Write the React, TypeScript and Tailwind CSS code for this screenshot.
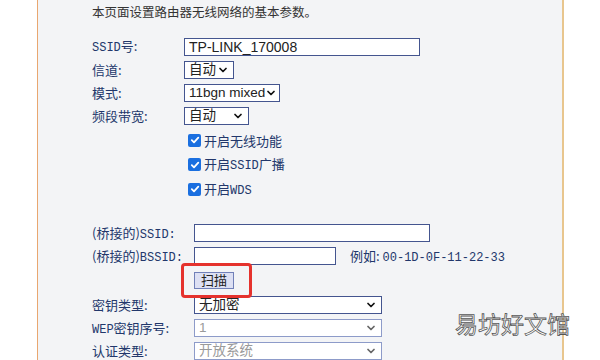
import { ChevronDown } from 'lucide-react';

const cn = '"Noto Sans CJK SC", sans-serif';
const latin = '"Liberation Sans", Arial, "Noto Sans CJK SC", sans-serif';

function Mono({ children }: { children: string }) {
  return <span className="font-['Liberation_Mono',monospace] text-[12px]">{children}</span>;
}

function Row({ label, width, children }: { label: React.ReactNode; width: string; children: React.ReactNode }) {
  return (
    <div className="flex items-center h-[23px]">
      <div className={`${width} shrink-0 text-[13px] text-[#22376b] whitespace-nowrap`} style={{ fontFamily: cn }}>
        {label}
      </div>
      {children}
    </div>
  );
}

function Select({ value, width, disabled }: { value: string; width: string; disabled?: boolean }) {
  return (
    <div
      className={`${width} h-[18px] flex items-center justify-between pl-[4px] pr-[4px] bg-white border whitespace-nowrap ${
        disabled ? 'border-[#8d9bc9] text-[#9a9a9a]' : 'border-[#44558f] text-[#222]'
      } text-[13.5px] leading-none`}
      style={{ fontFamily: latin }}
    >
      <span>{value}</span>
      <ChevronDown size={12} strokeWidth={3.5} className={`shrink-0 ${disabled ? 'text-[#666]' : 'text-[#111]'}`} />
    </div>
  );
}

function Input({ value, width }: { value?: string; width: string }) {
  return (
    <div
      className={`${width} h-[18px] flex items-center px-[4px] bg-white border border-[#44558f] text-[14px] text-[#222] leading-none`}
      style={{ fontFamily: latin }}
    >
      {value}
    </div>
  );
}

function Check({ children }: { children: React.ReactNode }) {
  return (
    <div className="flex items-center h-[24.5px] pl-[4px]">
      <span className="w-[13px] h-[13px] rounded-[2px] bg-[#1a6fe0] flex items-center justify-center">
        <svg width="10" height="10" viewBox="0 0 10 10">
          <path d="M1.8 5.2 L4 7.3 L8.3 2.6" fill="none" stroke="white" strokeWidth="1.8" strokeLinecap="round" strokeLinejoin="round" />
        </svg>
      </span>
      <span className="ml-[3px] text-[13px] text-[#22376b]" style={{ fontFamily: cn }}>
        {children}
      </span>
    </div>
  );
}

export default function App() {
  return (
    <div className="w-[600px] h-[360px] flex bg-white overflow-hidden relative">
      <div className="w-[37px] shrink-0 bg-white" />
      <div className="w-[1px] shrink-0 bg-[#e9a770]" />
      <div className="w-[524px] shrink-0 bg-[#f3f4f6] pl-[54px] pt-[4px]">
        <div className="h-[16px] flex items-center text-[12.5px] text-[#333]" style={{ fontFamily: cn }}>
          本页面设置路由器无线网络的基本参数。
        </div>

        <div className="mt-[15px]">
          <Row label={<><Mono>SSID</Mono>号:</>} width="w-[92px]">
            <Input value="TP-LINK_170008" width="w-[236px]" />
          </Row>
          <Row label="信道:" width="w-[92px]">
            <Select value="自动" width="w-[50px]" />
          </Row>
          <Row label="模式:" width="w-[92px]">
            <Select value="11bgn mixed" width="w-[96px]" />
          </Row>
          <Row label="频段带宽:" width="w-[92px]">
            <Select value="自动" width="w-[65px]" />
          </Row>
        </div>

        <div className="pl-[92px] mt-[1px]">
          <Check>开启无线功能</Check>
          <Check>
            开启<Mono>SSID</Mono>广播
          </Check>
          <Check>
            开启<Mono>WDS</Mono>
          </Check>
        </div>

        <div className="mt-[20px]">
          <Row label={<>(桥接的)<Mono>SSID:</Mono></>} width="w-[102px]">
            <Input width="w-[236px]" />
          </Row>
          <Row label={<>(桥接的)<Mono>BSSID:</Mono></>} width="w-[102px]">
            <Input width="w-[142px]" />
            <span className="ml-[14px] text-[13px] text-[#22376b]" style={{ fontFamily: cn }}>
              例如: <Mono>00-1D-0F-11-22-33</Mono>
            </span>
          </Row>
          <div className="pl-[102px] mt-[4px] h-[22px]">
            <div className="relative w-[40px] h-[17px]">
              <div
                className="w-[40px] h-[17px] flex items-center justify-center bg-[#dde0f3] border border-[#7180b8] text-[13px] text-[#222]"
                style={{ fontFamily: cn }}
              >
                扫描
              </div>
              <div className="absolute -left-[13px] -top-[9px] w-[71px] h-[35px] border-[3px] border-[#e5322d] rounded-[4px]" />
            </div>
          </div>
          <Row label="密钥类型:" width="w-[102px]">
            <Select value="无加密" width="w-[188px]" />
          </Row>
          <Row label={<><Mono>WEP</Mono>密钥序号:</>} width="w-[102px]">
            <Select value="1" width="w-[188px]" disabled />
          </Row>
          <Row label="认证类型:" width="w-[102px]">
            <Select value="开放系统" width="w-[188px]" disabled />
          </Row>
        </div>
      </div>
      <div className="w-[2px] shrink-0 bg-[#e8c68e]" />
      <div className="flex-1 bg-white" />

      <div
        className="absolute left-[455px] top-[312px] text-[23px] leading-none text-white [-webkit-text-stroke:0.8px_#555]"
        style={{ fontFamily: cn }}
      >
        易坊好文馆
      </div>
    </div>
  );
}
